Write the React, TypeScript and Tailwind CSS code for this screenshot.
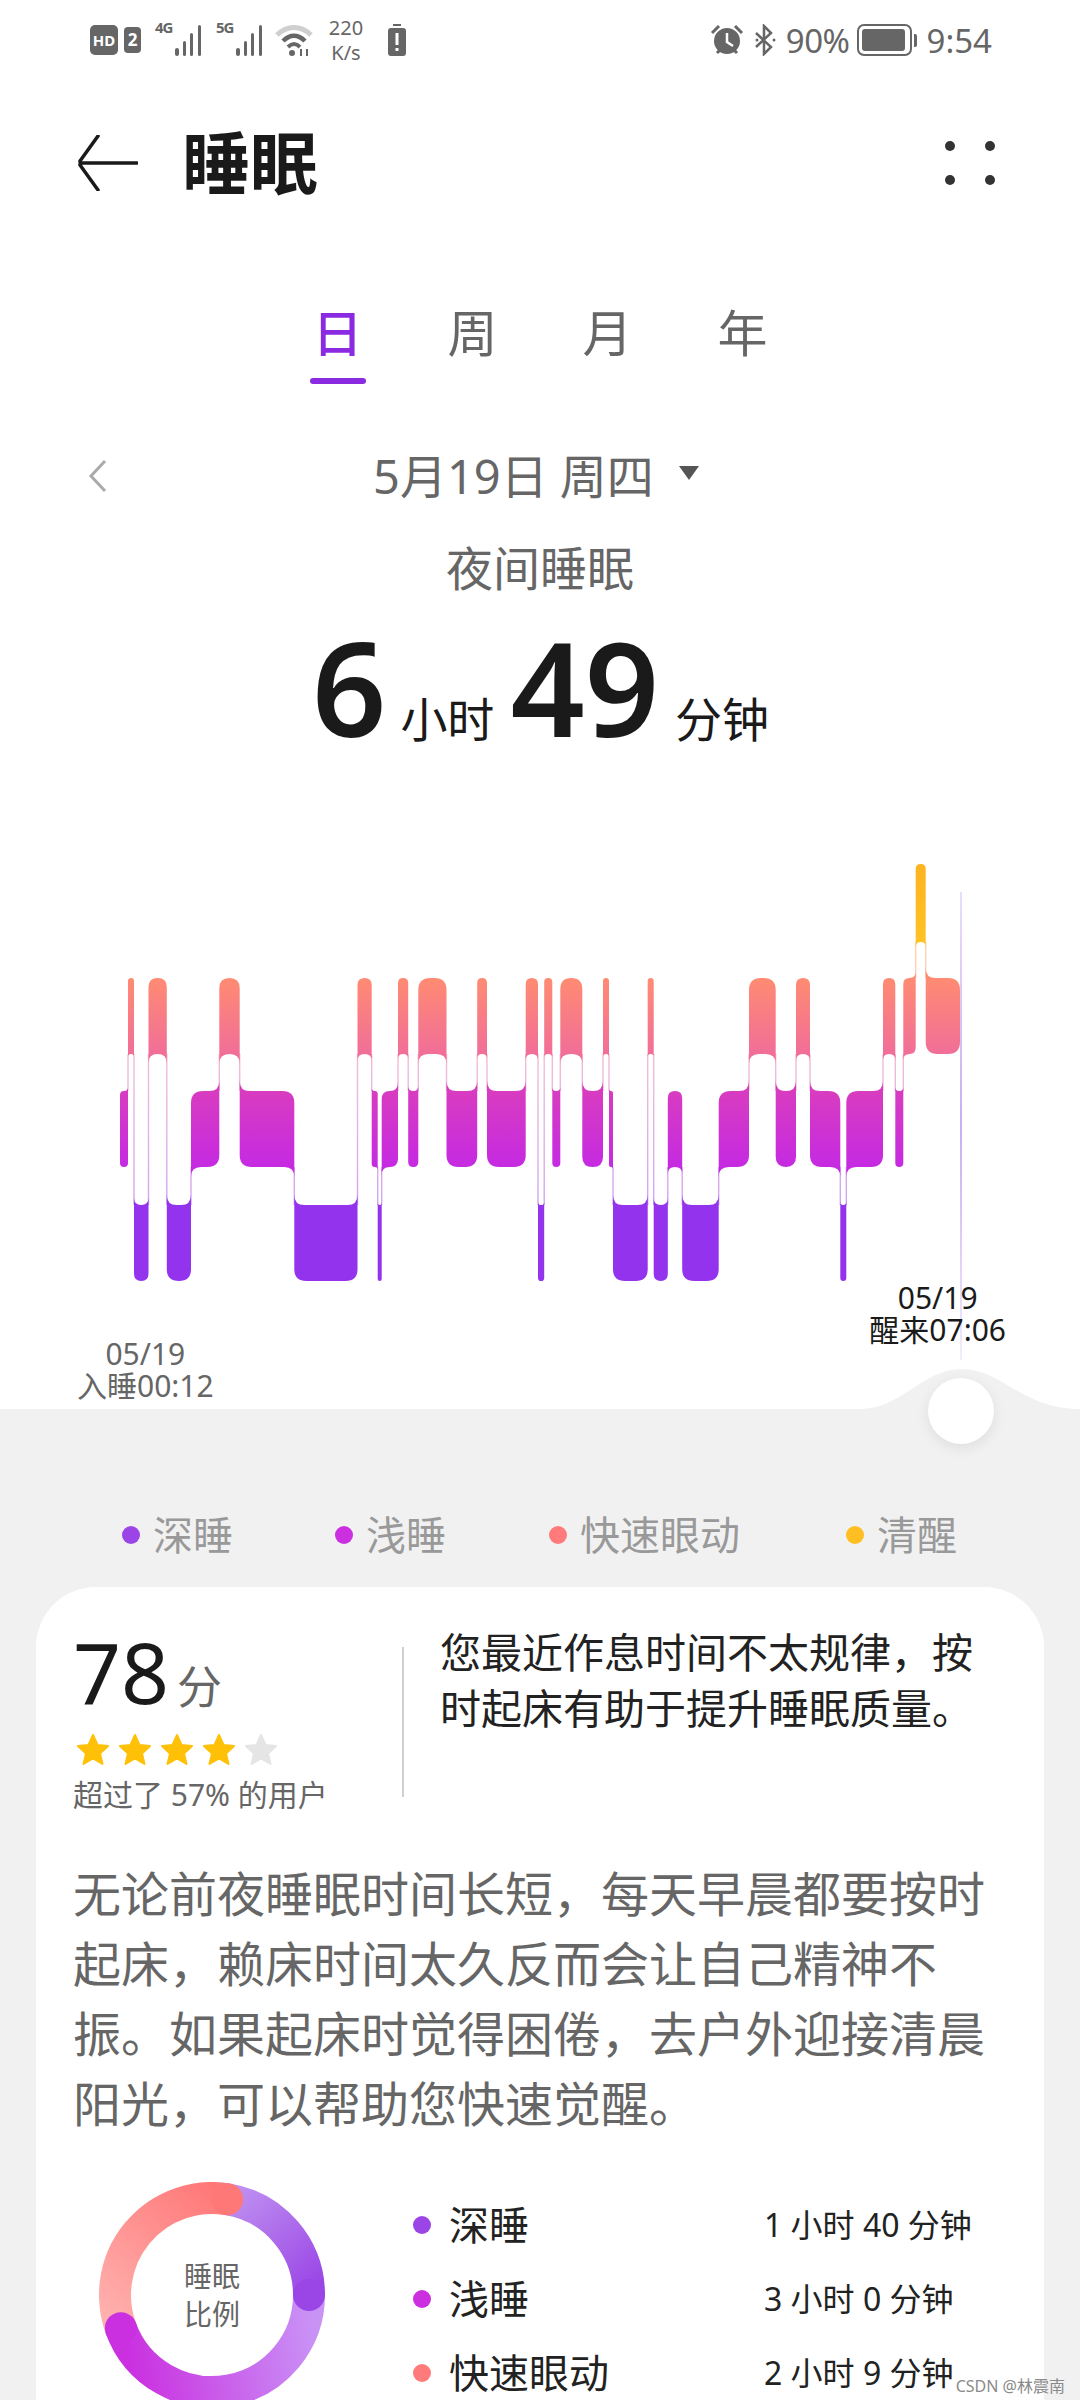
const BOUNDS = [
  120, 128, 134, 148.5, 166.8, 191, 219.3, 239.7, 294.3, 357.5, 371.7, 377.7, 381.7, 398, 408.2, 418.3, 446.5, 477.2,
  487, 525.7, 538, 544.2, 552.3, 560.3, 582.3, 603, 609, 613, 647.7, 653.7, 667.8, 682.2, 718.7, 749, 775.7, 796, 810,
  840.3, 846.3, 883, 895.3, 903.3, 915.7, 925.7, 960,
]
const STAGES = "LRDRDLRLDRLDLRLRLRLRDRLRLRLDRDLDLRLRLDLRLRAR"

const BANDS: Record<string, { level: number; top: number; bottom: number; fill: string }> = {
  A: { level: 0, top: 864, bottom: 942, fill: "url(#awake)" },
  R: { level: 1, top: 978, bottom: 1054, fill: "url(#rem)" },
  L: { level: 2, top: 1091, bottom: 1167, fill: "url(#light)" },
  D: { level: 3, top: 1205, bottom: 1281, fill: "#9333ee" },
}

function segmentPath(i: number) {
  const band = BANDS[STAGES[i]]
  const prev = i > 0 ? BANDS[STAGES[i - 1]] : null
  const next = i < STAGES.length - 1 ? BANDS[STAGES[i + 1]] : null
  const x0 = BOUNDS[i]
  const x1 = BOUNDS[i + 1]
  const t = band.top
  const b = band.bottom
  const rc = Math.min((x1 - x0) / 2, 12)
  const rf = Math.min((x1 - x0) / 2, 10)

  const prevUp = prev && prev.level < band.level
  const prevDown = prev && prev.level > band.level
  const nextUp = next && next.level < band.level
  const nextDown = next && next.level > band.level

  let d = prevUp ? `M${x0} ${t - rf}Q${x0} ${t} ${x0 + rf} ${t}` : `M${x0} ${t + rc}Q${x0} ${t} ${x0 + rc} ${t}`
  d += nextUp ? `L${x1 - rf} ${t}Q${x1} ${t} ${x1} ${t - rf}` : `L${x1 - rc} ${t}Q${x1} ${t} ${x1} ${t + rc}`
  d += nextDown ? `L${x1} ${b + rf}Q${x1} ${b} ${x1 - rf} ${b}` : `L${x1} ${b - rc}Q${x1} ${b} ${x1 - rc} ${b}`
  d += prevDown ? `L${x0 + rf} ${b}Q${x0} ${b} ${x0} ${b + rf}Z` : `L${x0 + rc} ${b}Q${x0} ${b} ${x0} ${b - rc}Z`
  return d
}

function SleepChart() {
  return (
    <svg width="1080" height="440" viewBox="0 850 1080 440" className="block overflow-visible">
      <defs>
        <linearGradient id="awake" gradientUnits="userSpaceOnUse" x1="0" y1="864" x2="0" y2="942">
          <stop offset="0" stopColor="#fdb31f" />
          <stop offset="1" stopColor="#ffc225" />
        </linearGradient>
        <linearGradient id="rem" gradientUnits="userSpaceOnUse" x1="0" y1="978" x2="0" y2="1054">
          <stop offset="0" stopColor="#ff8b72" />
          <stop offset="1" stopColor="#f16e98" />
        </linearGradient>
        <linearGradient id="light" gradientUnits="userSpaceOnUse" x1="0" y1="1091" x2="0" y2="1167">
          <stop offset="0" stopColor="#d83cc0" />
          <stop offset="1" stopColor="#c52ae2" />
        </linearGradient>
        <linearGradient id="link" gradientUnits="userSpaceOnUse" x1="0" y1="900" x2="0" y2="1240">
          <stop offset="0" stopColor="#ffdf9a" />
          <stop offset="0.4" stopColor="#f6c0d0" />
          <stop offset="0.7" stopColor="#e2b0e8" />
          <stop offset="1" stopColor="#c8a0f4" />
        </linearGradient>
        <linearGradient id="wake" gradientUnits="userSpaceOnUse" x1="0" y1="892" x2="0" y2="1360">
          <stop offset="0" stopColor="#e8defa" />
          <stop offset="0.5" stopColor="#c9aef0" />
          <stop offset="1" stopColor="#f2ecfc" />
        </linearGradient>
      </defs>
      <rect x="960" y="892" width="2" height="468" fill="url(#wake)" />
      {BOUNDS.slice(1, -1).map((x, i) => {
        const a = BANDS[STAGES[i]]
        const b = BANDS[STAGES[i + 1]]
        const upper = a.level < b.level ? a : b
        const lower = a.level < b.level ? b : a
        return <rect key={x} x={x - 0.7} y={upper.bottom} width="1.4" height={lower.top - upper.bottom} fill="url(#link)" />
      })}
      {STAGES.split("").map((stage, i) => (
        <path key={i} d={segmentPath(i)} fill={BANDS[stage].fill} />
      ))}
    </svg>
  )
}

function Signal({ label }: { label: string }) {
  return (
    <div className="relative h-[32px] w-[50px]">
      <span className="absolute left-0 top-[-4px] text-[15px] leading-[15px] font-bold tracking-[-1px] text-[#666]">{label}</span>
      <svg width="50" height="32" viewBox="0 0 50 32" fill="#666">
        <rect x="20" y="24" width="4" height="8" rx="2" />
        <rect x="28" y="17" width="3" height="15" rx="1.5" />
        <rect x="35" y="9" width="3" height="23" rx="1.5" />
        <rect x="43" y="1" width="3" height="31" rx="1.5" />
      </svg>
    </div>
  )
}

function StatusBar() {
  return (
    <div className="flex h-[80px] items-center pl-[90px] pr-[88px] text-[#666]">
      <div className="flex h-[30px] w-[28px] items-center justify-center rounded-[5px] bg-[#666] text-[15px] font-bold text-white">
        HD
      </div>
      <div className="ml-[6px] flex h-[26px] w-[17px] items-center justify-center rounded-[4px] bg-[#666] text-[17px] font-bold text-white">
        2
      </div>
      <div className="ml-[14px]">
        <Signal label="4G" />
      </div>
      <div className="ml-[11px]">
        <Signal label="5G" />
      </div>
      <svg className="ml-[9px]" width="38" height="32" viewBox="0 0 38 32" fill="none">
        <path d="M2 11C12 1 26 1 36 11" stroke="#cfcfcf" strokeWidth="5" />
        <path d="M8 17C15 10 23 10 30 17" stroke="#666" strokeWidth="4.5" />
        <path d="M13 23C17 19 21 19 25 23" stroke="#666" strokeWidth="4" />
        <circle cx="17" cy="29" r="3" fill="#666" />
        <path d="M26 25v7M32 25v7" stroke="#666" strokeWidth="2" />
      </svg>
      <div className="ml-[13px] flex w-[40px] flex-col items-center text-[20px] leading-[25px]">
        <span>220</span>
        <span>K/s</span>
      </div>
      <svg className="ml-[22px]" width="18" height="32" viewBox="0 0 18 32" fill="#666">
        <rect x="5" y="0" width="8" height="2" />
        <rect x="0" y="4" width="18" height="28" rx="3" />
        <rect x="7.500" y="9" width="3" height="12" fill="#fff" />
        <rect x="7.500" y="24" width="3" height="3" fill="#fff" />
      </svg>

      <svg className="ml-auto" width="34" height="32" viewBox="0 0 34 32" fill="#666">
        <circle cx="17" cy="17" r="13" />
        <path d="M17 9v9l6 4" stroke="#fff" strokeWidth="2.5" fill="none" />
        <path d="M2 9 9 2M32 9 25 2M7 29l3-3M27 29l-3-3" stroke="#666" strokeWidth="3" />
      </svg>
      <svg className="ml-[10px]" width="23" height="32" viewBox="0 0 23 32" fill="none" stroke="#666" strokeWidth="2.5">
        <path d="M2 9 17 23 10 30V2l7 7L2 23" />
        <circle cx="20" cy="16" r="1.5" fill="#666" stroke="none" />
        <circle cx="3" cy="16" r="1.5" fill="#666" stroke="none" />
      </svg>
      <span className="ml-[9px] text-[33px] leading-none tracking-[-0.5px]">90%</span>
      <div className="ml-[7px] flex items-center">
        <div className="h-[32px] w-[55px] rounded-[7px] border-2 border-[#666] p-[3px]">
          <div className="h-full w-[43px] rounded-[3px] bg-[#666]" />
        </div>
        <div className="ml-[2px] h-[13px] w-[3px] rounded-r-[2px] bg-[#666]" />
      </div>
      <span className="ml-[10px] text-[33px] leading-none">9:54</span>
    </div>
  )
}

function Header() {
  return (
    <div className="mt-[38px] flex h-[90px] items-center pl-[78px] pr-[85px]">
      <svg width="60" height="56" viewBox="0 0 60 56" fill="none" stroke="#1a1a1a" strokeWidth="3.5" strokeLinecap="round">
        <path d="M2 28H59M2 26 20 1M2 30 20 55" />
      </svg>
      <h1 className="ml-[44px] text-[68px] leading-none font-bold text-[#1a1a1a]">睡眠</h1>
      <div className="ml-auto grid grid-cols-2 gap-x-[30px] gap-y-[24px]">
        <span className="size-[10px] rounded-full bg-[#333]" />
        <span className="size-[10px] rounded-full bg-[#333]" />
        <span className="size-[10px] rounded-full bg-[#333]" />
        <span className="size-[10px] rounded-full bg-[#333]" />
      </div>
    </div>
  )
}

function Tabs() {
  return (
    <div className="mt-[95px] flex pl-[270px] text-[50px] leading-[60px] text-[#666]">
      <div className="flex w-[135px] flex-col items-center font-medium text-[#8a2be2]">
        <span>日</span>
        <span className="mt-[15px] h-[6px] w-[56px] rounded-full bg-[#8a2be2]" />
      </div>
      <span className="w-[135px] text-center">周</span>
      <span className="w-[135px] text-center">月</span>
      <span className="w-[135px] text-center">年</span>
    </div>
  )
}

function Summary() {
  return (
    <>
      <div className="mt-[62px] flex h-[60px] items-center pl-[88px] text-[#666]">
        <svg width="20" height="34" viewBox="0 0 20 34" fill="none" stroke="#aaa" strokeWidth="3">
          <path d="M17 2 3 17l14 15" />
        </svg>
        <span className="ml-[265px] text-[47px] leading-none">5月19日 周四</span>
        <svg className="ml-[24px] mb-[6px]" width="22" height="16" viewBox="0 0 22 16" fill="#555">
          <path d="M1 1H21L11 15Z" />
        </svg>
      </div>
      <div className="mt-[29px] text-center text-[47px] leading-[66px] text-[#666]">夜间睡眠</div>
      <div className="mt-[11px] flex h-[150px] items-center pl-[312px] text-[#1a1a1a]">
        <span className="text-[130px] leading-none font-semibold">6</span>
        <span className="ml-[14px] mt-[64px] text-[47px] leading-none">小时</span>
        <span className="ml-[16px] text-[130px] leading-none font-semibold">49</span>
        <span className="ml-[16px] mt-[64px] text-[47px] leading-none">分钟</span>
      </div>
    </>
  )
}

function ChartLabels() {
  return (
    <div className="flex h-[119px] items-start pl-[77px] pr-[74px] text-center text-[30px] leading-[32px]">
      <div className="mt-[48px] text-[#666]">
        <div>05/19</div>
        <div>入睡00:12</div>
      </div>
      <div className="ml-auto mt-[-8px] text-[#1a1a1a]">
        <div>05/19</div>
        <div>醒来07:06</div>
      </div>
    </div>
  )
}

function Legend() {
  const items = [
    { label: "深睡", dot: "bg-[#9c45e6]", className: "w-[213px]" },
    { label: "浅睡", dot: "bg-[#cb2fdf]", className: "w-[214px]" },
    { label: "快速眼动", dot: "bg-[#ff7b7b]", className: "w-[297px]" },
    { label: "清醒", dot: "bg-[#ffbf22]", className: "w-[130px]" },
  ]
  return (
    <div className="flex whitespace-nowrap pl-[122px] pt-[98px] text-[40px] leading-[56px] text-[#999]">
      {items.map(item => (
        <div key={item.label} className={`flex items-center ${item.className}`}>
          <span className={`size-[18px] rounded-full ${item.dot}`} />
          <span className="ml-[13px]">{item.label}</span>
        </div>
      ))}
    </div>
  )
}

function Star({ color }: { color: string }) {
  return (
    <svg width="34" height="32" viewBox="0 0 34 32" fill={color} stroke={color} strokeWidth="2" strokeLinejoin="round">
      <path d="M17 2 21.500 12 32 13 24 20.500 26.500 31 17 25.500 7.500 31 10 20.500 2 13 12.500 12Z" />
    </svg>
  )
}

function polar(angle: number, r = 97) {
  const rad = (angle * Math.PI) / 180
  return { x: 113 + r * Math.sin(rad), y: 113 - r * Math.cos(rad) }
}

function arc(from: number, to: number) {
  const a = polar(from)
  const b = polar(to)
  const large = to - from > 180 ? 1 : 0
  return `M${a.x} ${a.y}A97 97 0 ${large} 1 ${b.x} ${b.y}`
}

function Donut() {
  const ends = [
    { at: 90, color: "#9a45e6" },
    { at: 250, color: "#ca2fe0" },
    { at: 369, color: "#ff7878" },
  ]
  return (
    <div className="relative size-[226px] shrink-0">
      <svg width="226" height="226" viewBox="0 0 226 226" fill="none" strokeWidth="32">
        <defs>
          <linearGradient id="dDeep" gradientUnits="userSpaceOnUse" x1="128" y1="16" x2="210" y2="113">
            <stop offset="0" stopColor="#bf90f0" />
            <stop offset="1" stopColor="#9a45e6" />
          </linearGradient>
          <linearGradient id="dLight" gradientUnits="userSpaceOnUse" x1="210" y1="113" x2="22" y2="146">
            <stop offset="0" stopColor="#c993f6" />
            <stop offset="1" stopColor="#ca2fe0" />
          </linearGradient>
          <linearGradient id="dRem" gradientUnits="userSpaceOnUse" x1="22" y1="146" x2="128" y2="16">
            <stop offset="0" stopColor="#ffb0ae" />
            <stop offset="1" stopColor="#ff7878" />
          </linearGradient>
        </defs>
        <path d={arc(9, 90)} stroke="url(#dDeep)" />
        <path d={arc(90, 250)} stroke="url(#dLight)" />
        <path d={arc(250, 369)} stroke="url(#dRem)" />
        {ends.map(end => (
          <circle key={end.at} cx={polar(end.at).x} cy={polar(end.at).y} r="16" fill={end.color} />
        ))}
      </svg>
      <div className="absolute inset-0 flex flex-col items-center justify-center text-[28px] leading-[38px] text-[#666]">
        <span>睡眠</span>
        <span>比例</span>
      </div>
    </div>
  )
}

function Ratio() {
  const rows = [
    { label: "深睡", value: "1 小时 40 分钟", dot: "bg-[#9c45e6]" },
    { label: "浅睡", value: "3 小时 0 分钟", dot: "bg-[#cb2fdf]" },
    { label: "快速眼动", value: "2 小时 9 分钟", dot: "bg-[#ff7b7b]" },
  ]
  return (
    <div className="mt-[43px] flex items-start pl-[63px]">
      <Donut />
      <div className="ml-[88px] mt-[14px] flex flex-col gap-[17px]">
        {rows.map(row => (
          <div key={row.label} className="flex h-[57px] items-center text-[#222]">
            <span className={`size-[18px] rounded-full ${row.dot}`} />
            <span className="ml-[18px] w-[315px] text-[40px] leading-none">{row.label}</span>
            <span className="text-[32px] leading-none">{row.value}</span>
          </div>
        ))}
      </div>
    </div>
  )
}

function Card() {
  return (
    <div className="mx-[36px] mt-[24px] rounded-t-[60px] bg-white pb-[40px]">
      <div className="flex pt-[43px]">
        <div className="w-[366px] pl-[37px]">
          <div className="flex items-baseline text-[#1a1a1a]">
            <span className="text-[84px] leading-[84px]">78</span>
            <span className="ml-[8px] text-[45px] leading-none text-[#666]">分</span>
          </div>
          <div className="mt-[19px] flex gap-[8px] pl-[3px]">
            <Star color="#ffc107" />
            <Star color="#ffc107" />
            <Star color="#ffc107" />
            <Star color="#ffc107" />
            <Star color="#e5e5e5" />
          </div>
          <div className="mt-[10px] text-[30px] leading-[40px] text-[#666]">超过了 57% 的用户</div>
        </div>
        <div className="mt-[17px] h-[150px] w-[2px] bg-[#d0d0d0]" />
        <p className="-mt-[6px] ml-[36px] w-[545px] text-[41px] leading-[56px] text-[#222]">
          您最近作息时间不太规律，按时起床有助于提升睡眠质量。
        </p>
      </div>
      <p className="mt-[44px] px-[37px] text-[48px] leading-[70px] text-[#666]">
        无论前夜睡眠时间长短，每天早晨都要按时起床，赖床时间太久反而会让自己精神不振。如果起床时觉得困倦，去户外迎接清晨阳光，可以帮助您快速觉醒。
      </p>
      <Ratio />
    </div>
  )
}

export default function App() {
  return (
    <div className="relative h-[2400px] w-[1080px] overflow-hidden bg-white font-['Noto_Sans','Noto_Sans_CJK_SC',sans-serif]">
      <StatusBar />
      <Header />
      <Tabs />
      <Summary />
      <div className="mt-[88px]">
        <SleepChart />
      </div>
      <ChartLabels />
      <div className="relative bg-[#f1f1f1]">
        <svg className="absolute right-0 top-[-40px]" width="220" height="41" viewBox="0 0 220 41" fill="#f1f1f1">
          <path d="M0 41V40C42 40 62 0 102 0 142 0 162 40 220 40V41Z" />
        </svg>
        <div className="absolute left-[928px] top-[-31px] size-[66px] rounded-full bg-white shadow-[0_4px_14px_rgba(0,0,0,0.08)]" />
        <Legend />
        <Card />
      </div>
      <span className="absolute right-[15px] top-[2376px] text-[16px] leading-[20px] text-[#8a8a8a]">CSDN @林震南</span>
    </div>
  )
}
